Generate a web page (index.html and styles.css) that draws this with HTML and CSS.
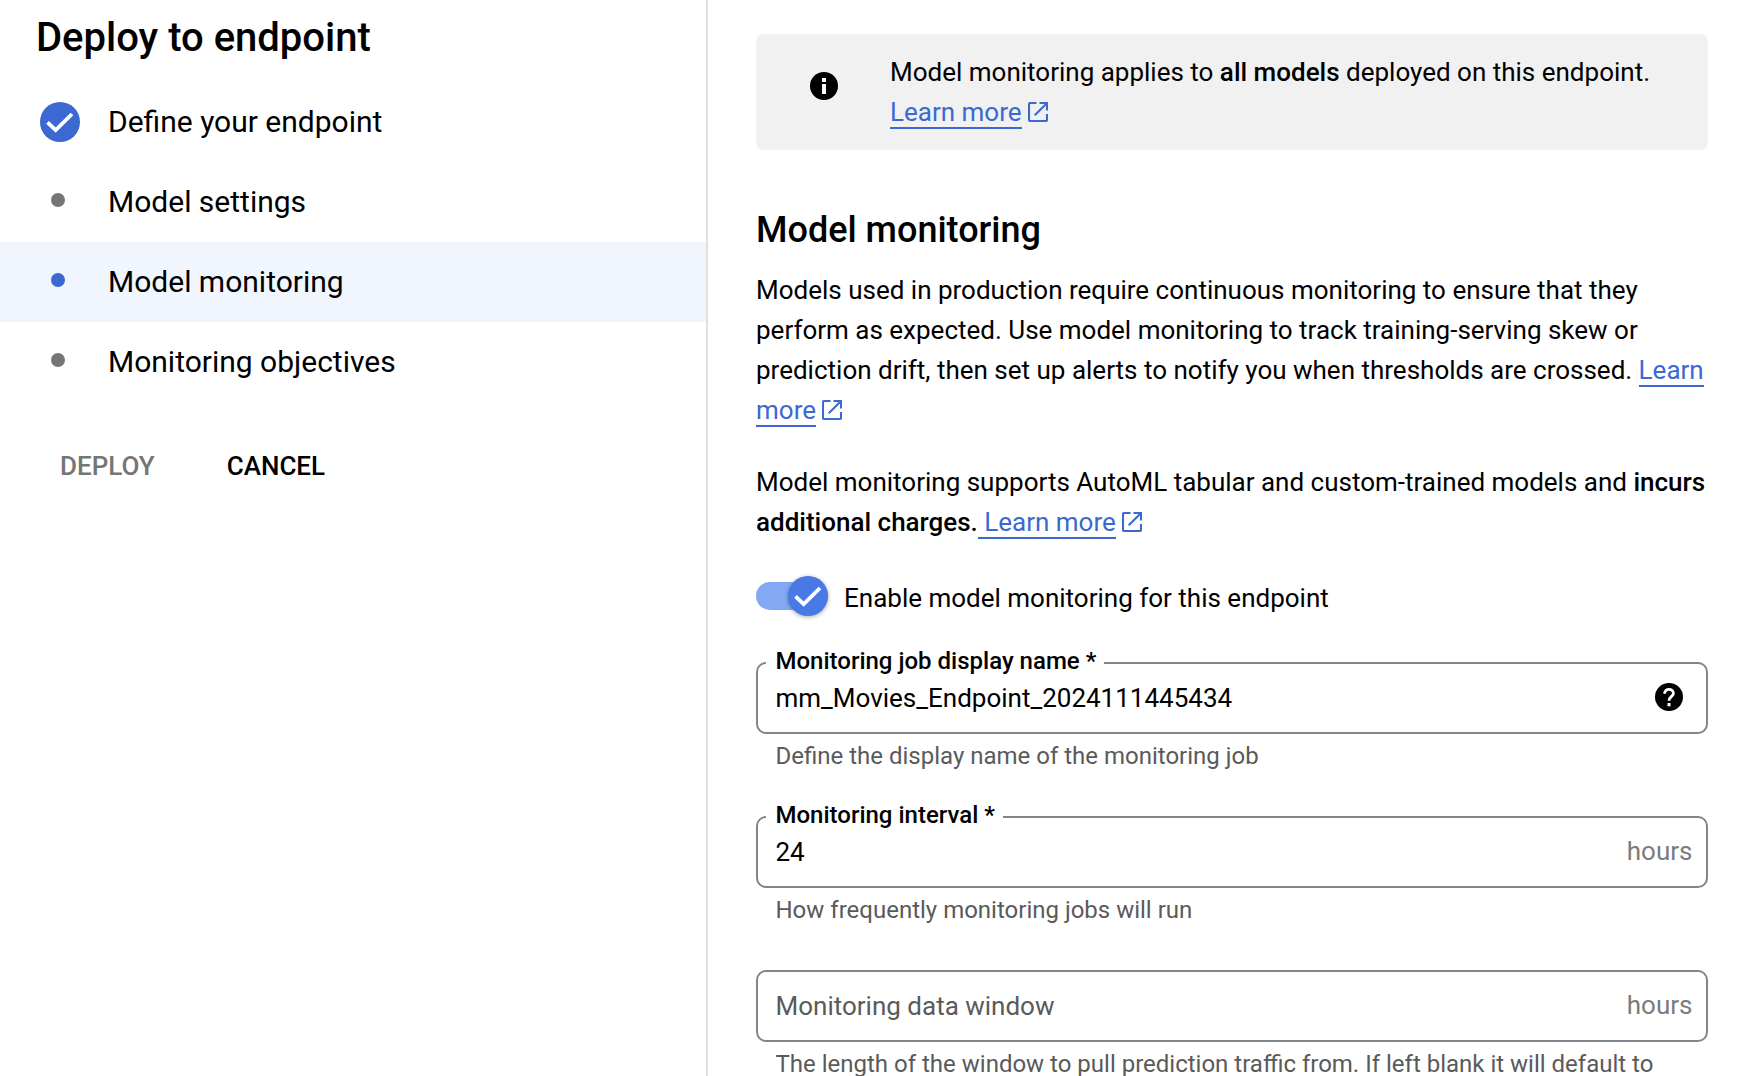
FILE: index.html
```html
<!DOCTYPE html>
<html lang="en">
<head>
<meta charset="utf-8">
<title>Deploy to endpoint</title>
<link rel="stylesheet" href="styles.css">
</head>
<body>
<svg class="defs" aria-hidden="true">
  <symbol id="open-new" viewBox="0 0 20 20">
    <path d="M8.5 1H2.2Q1 1 1 2.2V17.8Q1 19 2.2 19H17.8Q19 19 19 17.8V12M11.5 1H19V8.5M18.6 1.4L6.7 13.3" fill="none" stroke="currentColor" stroke-width="2.1"/>
  </symbol>
  <symbol id="check" viewBox="0 0 40 40">
    <path d="M7.5 20.3L15.7 28.2L32 12" fill="none" stroke="#fff" stroke-width="3.8"/>
  </symbol>
</svg>
<div class="page">
  <aside class="stepper">
    <h1 class="title">Deploy to endpoint</h1>
    <ol class="steps">
      <li class="step"><span class="marker"><span class="done"><svg><use href="#check"/></svg></span></span>Define your endpoint</li>
      <li class="step"><span class="marker"><span class="dot"></span></span>Model settings</li>
      <li class="step active"><span class="marker"><span class="dot"></span></span>Model monitoring</li>
      <li class="step"><span class="marker"><span class="dot"></span></span>Monitoring objectives</li>
    </ol>
    <div class="actions">
      <button class="btn" disabled>DEPLOY</button>
      <button class="btn">CANCEL</button>
    </div>
  </aside>
  <main class="content">
    <div class="notice">
      <svg class="info" viewBox="0 0 28 28"><circle cx="14" cy="14" r="14"/><path d="M12 6h4v4h-4zM12 12h4v10h-4z" fill="#fff"/></svg>
      <p>Model monitoring applies to <b>all models</b> deployed on this endpoint. <a href="#">Learn more</a><svg class="ext"><use href="#open-new"/></svg></p>
    </div>
    <h2 class="heading">Model monitoring</h2>
    <p class="para">Models used in production require continuous monitoring to ensure that they perform as expected. Use model monitoring to track training-serving skew or prediction drift, then set up alerts to notify you when thresholds are crossed. <a href="#">Learn more</a><svg class="ext"><use href="#open-new"/></svg></p>
    <p class="para">Model monitoring supports AutoML tabular and custom-trained models and <b>incurs additional charges.</b><a href="#">&nbsp;Learn more</a><svg class="ext"><use href="#open-new"/></svg></p>
    <div class="toggle-row">
      <span class="toggle"><span class="thumb"><svg><use href="#check"/></svg></span></span>
      <span class="toggle-label">Enable model monitoring for this endpoint</span>
    </div>
    <div class="field">
      <div class="box">
        <span class="label">Monitoring job display name *</span>
        <span class="value">mm_Movies_Endpoint_2024111445434</span>
        <svg class="help" viewBox="0 0 28 28"><circle cx="14" cy="14" r="14"/><path d="M9.6 10.8C9.6 7.9 11.5 6.4 14 6.4S18.4 8 18.4 10.4C18.4 13.3 14 13.7 14 17.8" fill="none" stroke="#fff" stroke-width="2.8"/><path d="M12.5 20h3v3.3h-3z" fill="#fff"/></svg>
      </div>
      <p class="hint">Define the display name of the monitoring job</p>
    </div>
    <div class="field">
      <div class="box">
        <span class="label">Monitoring interval *</span>
        <span class="value">24</span>
        <span class="suffix">hours</span>
      </div>
      <p class="hint">How frequently monitoring jobs will run</p>
    </div>
    <div class="field">
      <div class="box">
        <span class="value placeholder">Monitoring data window</span>
        <span class="suffix">hours</span>
      </div>
      <p class="hint">The length of the window to pull prediction traffic from. If left blank it will default to</p>
    </div>
  </main>
</div>
</body>
</html>
```

FILE: styles.css
```css
* { box-sizing: border-box; margin: 0; padding: 0; }
body { height: 1076px; overflow: hidden; background: #fff; color: #000; font: 26px/40px Roboto, "Liberation Sans", sans-serif; }
b { font-weight: 500; }
a { color: #3b69d1; text-decoration: none; border-bottom: 2px solid #3b69d1; }
.defs { position: absolute; width: 0; height: 0; }
.page { display: flex; height: 1076px; }

.stepper { width: 708px; flex: none; border-right: 2px solid #e0e0e0; padding-top: 14px; }
.title { font-size: 40px; line-height: 48px; font-weight: 500; padding-left: 36px; }
.steps { list-style: none; margin-top: 20px; }
.step { display: flex; align-items: center; height: 80px; font-size: 30px; }
.step.active { background: #f0f5fe; }
.marker { width: 108px; flex: none; padding-left: 40px; display: flex; }
.done { width: 40px; height: 40px; border-radius: 50%; background: #3b69d1; }
.done svg, .thumb svg { display: block; width: 40px; height: 40px; }
.dot { width: 14px; height: 14px; border-radius: 50%; background: #757575; margin: 0 0 4px 11px; }
.active .dot { background: #3b69d1; }
.actions { display: flex; gap: 72px; padding: 46px 0 0 60px; }
.btn { border: 0; background: none; color: #000; font: 500 26px/36px Roboto, "Liberation Sans", sans-serif; }
.btn:disabled { color: #757575; }

.content { width: 1000px; padding: 34px 0 0 48px; }
.notice { display: flex; gap: 52px; height: 116px; padding: 18px 0 0 54px; border-radius: 8px; background: #f1f1f1; }
.notice p { width: 770px; }
.info { width: 28px; height: 28px; margin-top: 20px; flex: none; }
.ext { width: 20px; height: 20px; margin-left: 6px; vertical-align: -1px; color: #3b69d1; }
.heading { font-size: 36px; line-height: 48px; font-weight: 500; margin-top: 56px; }
.para { margin-top: 32px; }
.heading + .para { margin-top: 16px; }
.toggle-row { display: flex; gap: 16px; margin-top: 34px; height: 42px; }
.toggle { display: flex; justify-content: flex-end; width: 72px; height: 28px; margin-top: 6px; border-radius: 14px; background: #84a9f4; }
.thumb { width: 40px; height: 40px; margin-top: -6px; border-radius: 50%; background: #4879e4; box-shadow: 0 1px 4px rgba(0, 0, 0, .35); }
.toggle-label { padding-top: 2px; }

.field { margin-top: 44px; width: 952px; }
.box { position: relative; display: flex; justify-content: space-between; height: 72px; padding: 0 13.5px 0 17.5px; border: 2px solid #80868b; border-radius: 10px; }
.label { position: absolute; left: 8px; top: -17px; padding: 0 8px 0 9.5px; background: #fff; font-size: 24px; line-height: 28px; font-weight: 500; }
.value { line-height: 68px; }
.placeholder { color: #5a5a5a; }
.suffix { line-height: 66px; color: #7c7c7c; }
.help { width: 28px; height: 28px; margin: 19px 9.5px 0 0; }
.hint { padding: 6px 0 0 19.5px; font-size: 24px; line-height: 32px; color: #5a5a5a; white-space: nowrap; }
```
